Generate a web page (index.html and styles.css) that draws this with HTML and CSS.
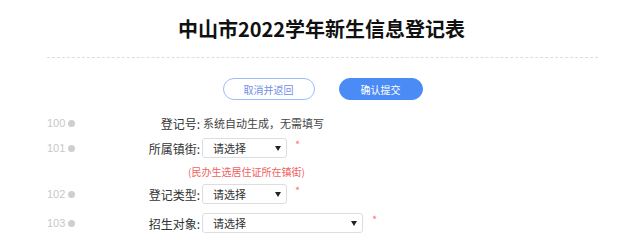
FILE: index.html
```html
<!DOCTYPE html>
<html lang="zh-CN">
<head>
<meta charset="utf-8">
<title>中山市2022学年新生信息登记表</title>
<link rel="stylesheet" href="styles.css">
</head>
<body>
<div class="page">
  <h1 class="title">中山市2022学年新生信息登记表</h1>
  <div class="divider"></div>
  <div class="actions">
    <button class="btn btn-cancel" type="button">取消并返回</button>
    <button class="btn btn-submit" type="button">确认提交</button>
  </div>
  <div class="form">
    <div class="row row-100">
      <div class="num"><span>100</span><i class="dot"></i></div>
      <div class="label">登记号:</div>
      <div class="value">系统自动生成，无需填写</div>
    </div>
    <div class="row row-101">
      <div class="num"><span>101</span><i class="dot"></i></div>
      <div class="label">所属镇街:</div>
      <div class="select"><span>请选择</span><i class="caret"></i></div>
      <span class="req">*</span>
    </div>
    <div class="hint">(民办生选居住证所在镇街)</div>
    <div class="row row-102">
      <div class="num"><span>102</span><i class="dot"></i></div>
      <div class="label">登记类型:</div>
      <div class="select"><span>请选择</span><i class="caret"></i></div>
      <span class="req">*</span>
    </div>
    <div class="row row-103">
      <div class="num"><span>103</span><i class="dot"></i></div>
      <div class="label">招生对象:</div>
      <div class="select select-wide"><span>请选择</span><i class="caret"></i></div>
      <span class="req">*</span>
    </div>
  </div>
</div>
</body>
</html>
```
FILE: styles.css
```css
html, body {
  margin: 0;
  padding: 0;
  background: #fff;
}
body {
  font-family: "Noto Sans CJK SC", "Noto Sans", sans-serif;
  color: #333;
}
.page {
  width: 641px;
}
.title {
  margin: 0;
  padding-top: 14px;
  height: 30px;
  line-height: 30px;
  text-align: center;
  font-size: 20px;
  font-weight: bold;
  color: #111;
  padding-left: 2px;
}
.divider {
  margin: 13px 43px 0 47px;
  border-top: 1px dashed #ddd;
}
.actions {
  display: flex;
  justify-content: center;
  gap: 24px;
  margin-top: 20px;
  padding-left: 4px;
}
.btn {
  height: 22px;
  border-radius: 11px;
  font-family: inherit;
  font-size: 10px;
  padding: 0;
  cursor: pointer;
}
.btn-cancel {
  width: 92px;
  background: #fff;
  border: 1px solid #9dbdf9;
  color: #6e8fe8;
}
.btn-submit {
  width: 84px;
  background: #4a8bf5;
  border: 1px solid #4a8bf5;
  color: #fff;
}
.form {
  margin-top: 13px;
}
.row {
  display: flex;
  align-items: center;
  padding-left: 47px;
  height: 20px;
  font-size: 12px;
}
.num {
  width: 40px;
  display: flex;
  align-items: center;
  gap: 3px;
  color: #c8c8c8;
  font-family: "Liberation Sans", Arial, sans-serif;
  font-size: 11px;
}
.dot {
  display: inline-block;
  width: 7px;
  height: 7px;
  border-radius: 50%;
  background: #cfcfcf;
}
.label {
  width: 113px;
  text-align: right;
  color: #333;
  padding-right: 1px;
}
.value {
  margin-left: 2px;
  color: #444;
  font-size: 11px;
}
.select {
  margin-left: 1px;
  box-sizing: border-box;
  height: 20px;
  width: 85px;
  border: 1px solid #ddd;
  border-radius: 3px;
  display: flex;
  align-items: center;
  justify-content: space-between;
  padding: 0 5px 0 10px;
  color: #333;
  font-size: 11px;
}
.select-wide {
  width: 161px;
}
.caret {
  width: 0;
  height: 0;
  border-left: 3px solid transparent;
  border-right: 3px solid transparent;
  border-top: 5px solid #222;
}
.req {
  margin-left: 8px;
  color: #f77;
  font-size: 11px;
  align-self: flex-start;
  line-height: 12px;
}
.row-101 { margin-top: 5px; }
.hint {
  margin-top: 6px;
  height: 16px;
  line-height: 16px;
  padding-left: 188px;
  font-size: 10px;
  color: #f0625f;
}
.row-102 { margin-top: 4px; }
.row-103 { margin-top: 9px; }
.row-103 .req { margin-left: 9px; }
```
